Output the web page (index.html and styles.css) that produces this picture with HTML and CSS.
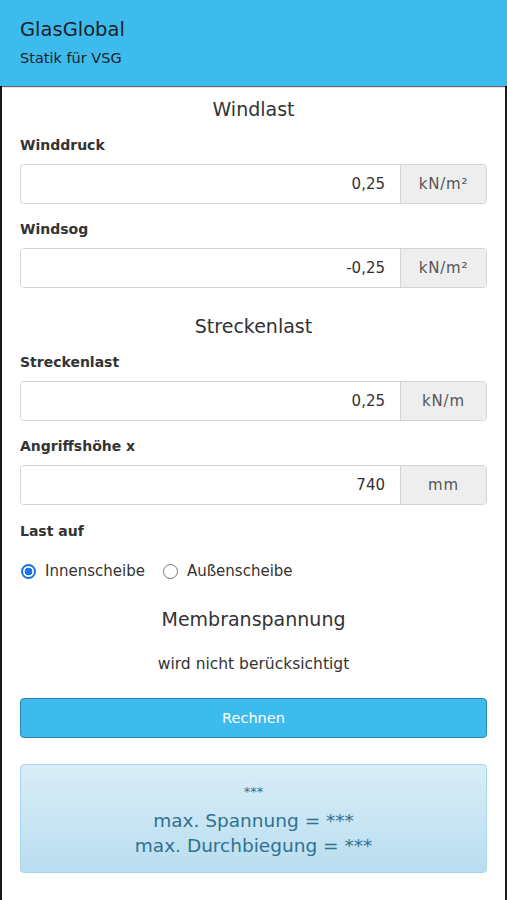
FILE: index.html
```html
<!DOCTYPE html>
<html lang="de">
<head>
<meta charset="utf-8">
<title>GlasGlobal</title>
<link rel="stylesheet" href="styles.css">
</head>
<body>
<header class="topbar">
  <div class="brand">GlasGlobal</div>
  <div class="subtitle">Statik für VSG</div>
</header>
<main class="content">
  <h2 class="section-title first">Windlast</h2>
  <label class="field-label">Winddruck</label>
  <div class="input-group">
    <div class="input-value">0,25</div>
    <div class="addon">kN/m²</div>
  </div>
  <label class="field-label">Windsog</label>
  <div class="input-group">
    <div class="input-value">-0,25</div>
    <div class="addon">kN/m²</div>
  </div>

  <h2 class="section-title">Streckenlast</h2>
  <label class="field-label tight">Streckenlast</label>
  <div class="input-group">
    <div class="input-value">0,25</div>
    <div class="addon">kN/m</div>
  </div>
  <label class="field-label">Angriffshöhe x</label>
  <div class="input-group">
    <div class="input-value">740</div>
    <div class="addon">mm</div>
  </div>
  <label class="field-label last-label">Last auf</label>
  <div class="radios">
    <span class="radio-item"><span class="radio checked"></span>Innenscheibe</span>
    <span class="radio-item"><span class="radio"></span>Außenscheibe</span>
  </div>

  <h2 class="section-title">Membranspannung</h2>
  <p class="note">wird nicht berücksichtigt</p>
  <button class="btn">Rechnen</button>
  <div class="result">
    <div class="stars">***</div>
    <div class="result-line first-line">max. Spannung = ***</div>
    <div class="result-line">max. Durchbiegung = ***</div>
  </div>
</main>
</body>
</html>
```

FILE: styles.css
```css
* { box-sizing: border-box; }
html, body { margin: 0; padding: 0; }
body {
  font-family: "DejaVu Sans", Verdana, sans-serif;
  color: #333;
  background: #fff;
  width: 507px;
  height: 900px;
  overflow: hidden;
}
.topbar {
  height: 86px;
  background: #3dbbed;
  padding: 19px 20px 0;
  box-shadow: 0 1px 1px rgba(0, 0, 0, 0.6);
  position: relative;
  z-index: 1;
}
.brand {
  font-size: 19.5px;
  line-height: 22px;
  color: #1b2227;
}
.subtitle {
  font-size: 14.5px;
  line-height: 18px;
  margin-top: 8px;
  color: #1b2227;
}
.content {
  border-left: 2px solid #1a1a1a;
  border-right: 2px solid #1a1a1a;
  padding: 8px 18px 40px;
  min-height: 814px;
  display: flex;
  flex-direction: column;
}
.section-title {
  margin: 24px 0 0;
  font-size: 19px;
  font-weight: normal;
  line-height: 28px;
  text-align: center;
  color: #333;
}
.section-title.first { margin-top: 1px; }
.field-label {
  display: block;
  font-size: 14px;
  font-weight: bold;
  line-height: 20px;
  margin-top: 15px;
  color: #333;
}
.section-title + .field-label { margin-top: 12px; }
.field-label.last-label { margin-top: 16px; }
.input-group {
  display: flex;
  height: 40px;
  margin-top: 9px;
  border: 1px solid #d4d4d4;
  border-radius: 4px;
  overflow: hidden;
}
.input-value {
  flex: 1;
  background: #fff;
  text-align: right;
  padding-right: 15px;
  font-size: 15px;
  line-height: 38px;
  color: #333;
}
.addon {
  width: 86px;
  background: #eee;
  border-left: 1px solid #d4d4d4;
  text-align: center;
  font-size: 15px;
  letter-spacing: 0.8px;
  line-height: 38px;
  color: #555;
}
.radios {
  display: flex;
  gap: 17px;
  margin-top: 20px;
  height: 20px;
  align-items: center;
  font-size: 15px;
}
.radio-item {
  display: flex;
  align-items: center;
  gap: 9px;
}
.radio {
  width: 15px;
  height: 15px;
  border-radius: 50%;
  border: 1px solid #777;
  background: #fff;
  margin-left: 1px;
}
.radio.checked {
  border: 2px solid #1a73e8;
  background: radial-gradient(circle, #1a73e8 0 3.6px, #fff 4.2px);
}
.note {
  margin: 21px 0 0;
  text-align: center;
  font-size: 15.5px;
  line-height: 20px;
}
.btn {
  margin-top: 24px;
  height: 40px;
  width: 100%;
  background: #3dbbed;
  border: 1px solid #2b86ad;
  border-radius: 4px;
  color: #fff;
  font-family: inherit;
  font-size: 14.5px;
}
.result {
  margin-top: 26px;
  height: 109px;
  border: 1px solid #a9d6ee;
  border-radius: 4px;
  background: linear-gradient(to bottom, #d9edf7, #b9def0);
  color: #31708f;
  text-align: center;
  padding-top: 17px;
}
.stars {
  font-size: 13px;
  line-height: 20px;
}
.result-line {
  font-size: 18.5px;
  line-height: 25px;
}
.result-line.first-line { margin-top: 6px; }
```
